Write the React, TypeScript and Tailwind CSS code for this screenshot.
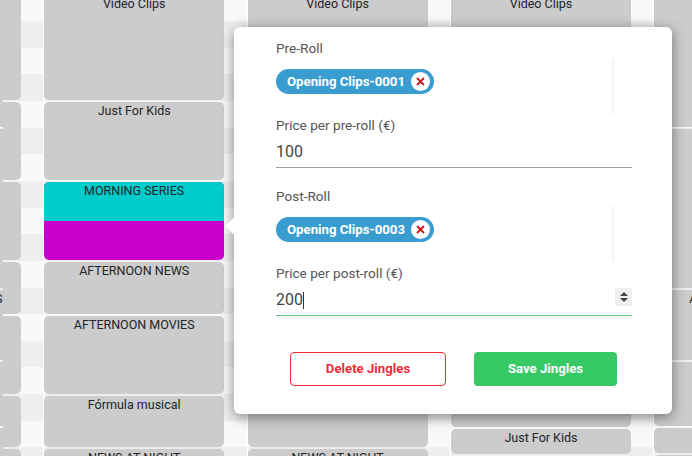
import React from 'react';

interface Slot {
  title?: string;
  height: number;
  split?: boolean;
}

// heights include the 2px white gap under each event
const mondaySlots: Slot[] = [
  { title: 'Video Clips', height: 107 },
  { title: 'Just For Kids', height: 80 },
  { title: 'MORNING SERIES', height: 80, split: true },
  { title: 'AFTERNOON NEWS', height: 54 },
  { title: 'AFTERNOON MOVIES', height: 80 },
  { title: 'Fórmula musical', height: 53 },
  { title: 'NEWS AT NIGHT', height: 40 },
];

const thirdDaySlots: Slot[] = [
  { title: 'Video Clips', height: 434 },
  { title: 'Just For Kids', height: 27 },
  { height: 40 },
];

const lastDaySlots: Slot[] = [
  { height: 134 },
  { height: 161 },
  { title: 'AFTERNOON NEWS', height: 72 },
  { height: 66 },
  { height: 27 },
  { height: 40 },
];

const leftMainSlots: Slot[] = [
  { height: 107 },
  { height: 80 },
  { height: 80 },
  { height: 54 },
  { height: 80 },
  { height: 53 },
  { height: 40 },
];

const leftSliverSlots: Slot[] = [
  { height: 134 },
  { height: 161 },
  { title: 'S', height: 72 },
  { height: 66 },
  { height: 40 },
];

const stripes =
  'bg-[repeating-linear-gradient(#f8f9fb_-5.65px,#f8f9fb_21px,#eeeeee_21px,#eeeeee_47.65px)]';

const EventBlock: React.FC<{ slot: Slot }> = ({ slot }) => (
  <div className="shrink-0 pb-[2px]" style={{ height: slot.height }}>
    <div
      className={`relative h-full overflow-hidden rounded-[5px] text-center text-[12.5px] leading-[18px] text-[#212529] ${
        slot.split ? 'bg-[#cc00cc]' : 'bg-[#cccccc]'
      }`}
    >
      {slot.split && <div className="absolute inset-x-0 top-0 h-[39px] bg-[#00cccc]" />}
      <div className="relative whitespace-nowrap">{slot.title}</div>
    </div>
  </div>
);

const DayColumn: React.FC<{ slots: Slot[] }> = ({ slots }) => (
  <div className={`flex h-[456px] w-[203.4px] shrink-0 border-l border-white ${stripes}`}>
    <div className="-mt-[5px] flex w-[180px] flex-col">
      {slots.map((slot, index) => (
        <EventBlock key={index} slot={slot} />
      ))}
    </div>
  </div>
);

const JingleChip: React.FC<{ label: string }> = ({ label }) => (
  <div className="flex h-[25px] w-[158px] items-center justify-between rounded-full bg-[#3a9dcf] pl-[11px] pr-[4px]">
    <span className="whitespace-nowrap text-[13.2px] font-bold text-white">{label}</span>
    <span className="flex h-[19px] w-[19px] items-center justify-center rounded-full bg-white">
      <svg width="9" height="9" viewBox="0 0 9 9" fill="none" stroke="#d0121b" strokeWidth="1.8">
        <path d="M1 1 L8 8 M8 1 L1 8" />
      </svg>
    </span>
  </div>
);

const JingleSection: React.FC<{
  title: string;
  chip: string;
  priceLabel: string;
  price: string;
  focused?: boolean;
}> = ({ title, chip, priceLabel, price, focused }) => (
  <div>
    <div className="h-[18px] text-[13.6px] leading-[16px] text-[#555555]">{title}</div>
    <div className="h-[56px] w-[338px] border-r-2 border-[#f3f3f3] pt-[11px]">
      <JingleChip label={chip} />
    </div>
    <div className="mt-[3px] h-[18px] text-[13.6px] leading-[16px] text-[#555555]">{priceLabel}</div>
    <div
      className={`mt-[5px] flex h-[28px] items-start justify-between border-b pb-[3px] ${
        focused ? 'border-[#5ec87e]' : 'border-[#9e9e9e]'
      }`}
    >
      <span className="flex items-center text-[16px] leading-[24px] text-[#444444]">
        {price}
        {focused && <span className="h-[17px] w-px bg-[#333333]" />}
      </span>
      {focused && (
        <span className="flex h-[18px] w-[17px] flex-col items-center justify-center gap-[2px] bg-[#f0f0f0]">
          <span className="h-0 w-0 border-x-[4px] border-b-[4px] border-x-transparent border-b-[#444444]" />
          <span className="h-0 w-0 border-x-[4px] border-t-[4px] border-x-transparent border-t-[#444444]" />
        </span>
      )}
    </div>
  </div>
);

const JinglesPopover: React.FC = () => (
  <div className="absolute left-[234px] top-[27px] flex h-[387px] w-[438px] flex-col rounded-[6px] bg-white pl-[42px] pr-[40px] pt-[13px] shadow-[0_3px_14px_rgba(0,0,0,0.45)]">
    <div className="absolute -left-[6px] top-[193px] h-[12px] w-[12px] rotate-45 bg-white" />
    <JingleSection
      title="Pre-Roll"
      chip="Opening Clips-0001"
      priceLabel="Price per pre-roll (€)"
      price="100"
    />
    <div className="mt-[20px]">
      <JingleSection
        title="Post-Roll"
        chip="Opening Clips-0003"
        priceLabel="Price per post-roll (€)"
        price="200"
        focused
      />
    </div>
    <div className="ml-[14px] mt-[36px] flex gap-[28px]">
      <button
        type="button"
        className="h-[34px] w-[156px] rounded-[4px] border border-[#ef2c36] bg-white text-[13.2px] font-bold text-[#ef2c36]"
      >
        Delete Jingles
      </button>
      <button
        type="button"
        className="h-[34px] w-[143px] rounded-[4px] bg-[#37c966] text-[13.2px] font-bold text-white"
      >
        Save Jingles
      </button>
    </div>
  </div>
);

export default function App() {
  return (
    <div className="relative h-[456px] w-[692px] overflow-hidden bg-white font-['Roboto',sans-serif]">
      <div className="flex">
        {/* day cut off by the left edge */}
        <div className={`flex h-[456px] w-[43.2px] shrink-0 ${stripes}`}>
          <div className="-mt-[5px] flex w-[3px] flex-col">
            {leftSliverSlots.map((slot, index) => (
              <div key={index} className="shrink-0 pb-[2px]" style={{ height: slot.height }}>
                <div className="h-full w-[3px] overflow-hidden bg-[#cccccc] text-[12.5px] leading-[18px] text-[#212529]">
                  {slot.title && <span className="-ml-[5px] block">{slot.title}</span>}
                </div>
              </div>
            ))}
          </div>
          <div className="-mt-[5px] flex w-[18px] flex-col">
            {leftMainSlots.map((slot, index) => (
              <div key={index} className="shrink-0 pb-[2px]" style={{ height: slot.height }}>
                <div className="h-full rounded-r-[5px] bg-[#cccccc]" />
              </div>
            ))}
          </div>
        </div>
        <DayColumn slots={mondaySlots} />
        <DayColumn slots={mondaySlots} />
        <DayColumn slots={thirdDaySlots} />
        <DayColumn slots={lastDaySlots} />
      </div>
      <JinglesPopover />
    </div>
  );
}
